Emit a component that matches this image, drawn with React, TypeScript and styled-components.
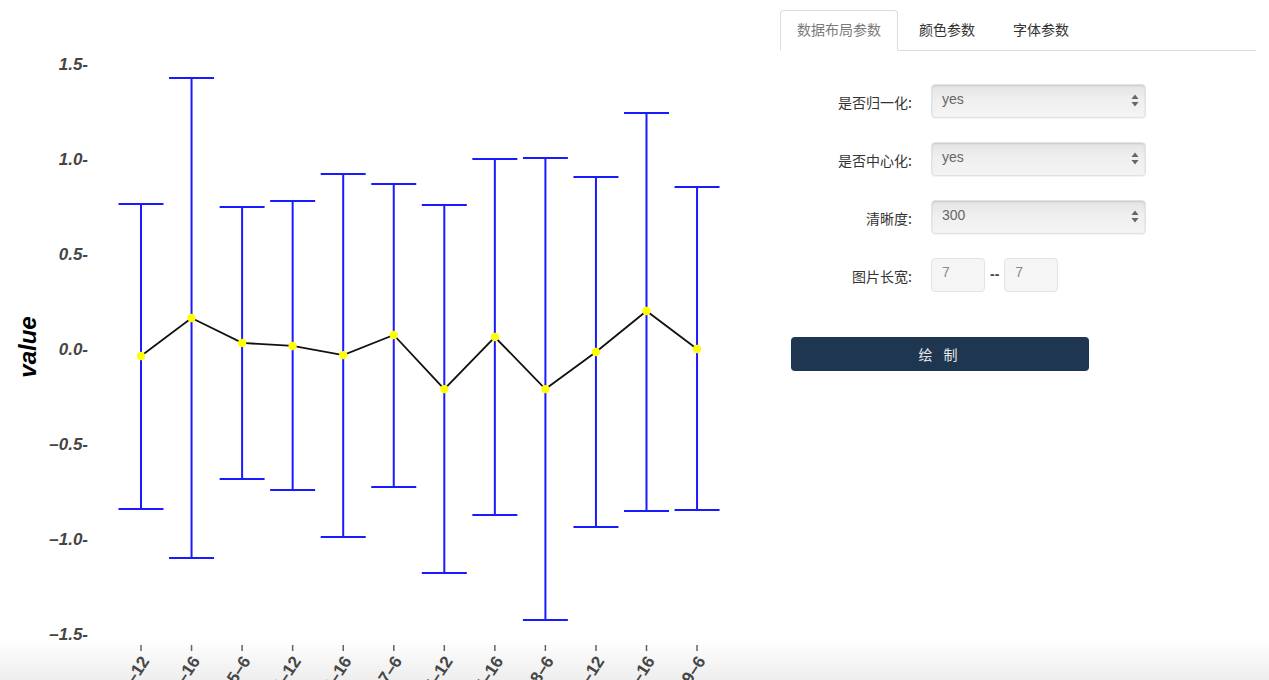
import React from "react";
import styled, { createGlobalStyle } from "styled-components";

const GlobalStyle = createGlobalStyle`
  html, body { margin: 0; padding: 0; background: #fff; }
  body {
    font-family: "Liberation Sans", "Noto Sans CJK SC", sans-serif;
    color: #333;
    overflow: hidden;
  }
`;

const Page = styled.div`
  display: flex;
  width: 1269px;
  height: 680px;
  overflow: hidden;
`;

const ChartPane = styled.div`
  width: 780px;
  flex: 0 0 780px;
  height: 680px;
`;

const Panel = styled.div`
  flex: 1;
  padding: 10px 13px 0 0;
`;

const Tabs = styled.ul`
  display: flex;
  list-style: none;
  margin: 0;
  padding: 0;
  border-bottom: 1px solid #dddddd;
`;

const Tab = styled.li<{ $active?: boolean }>`
  margin: 0 4px -1px 0;
  padding: 0 16px;
  height: 39px;
  line-height: 36px;
  font-size: 14px;
  font-family: "Noto Sans CJK SC", sans-serif;
  color: ${(p) => (p.$active ? "#7a7a7a" : "#333")};
  border: 1px solid ${(p) => (p.$active ? "#dddddd" : "transparent")};
  border-bottom-color: ${(p) => (p.$active ? "#fff" : "transparent")};
  border-radius: 4px 4px 0 0;
  background: ${(p) => (p.$active ? "#fff" : "transparent")};
  cursor: pointer;
`;

const Form = styled.div`
  display: grid;
  grid-template-columns: 132px 215px;
  column-gap: 19px;
  row-gap: 24px;
  align-items: center;
  margin-top: 33px;
`;

const Label = styled.label`
  text-align: right;
  font-size: 14px;
  font-family: "Noto Sans CJK SC", sans-serif;
  color: #333;
  padding-top: 2px;
`;

const SelectWrap = styled.div`
  position: relative;
  height: 34px;
`;

const Select = styled.select`
  appearance: none;
  -webkit-appearance: none;
  width: 100%;
  height: 34px;
  padding: 0 24px 4px 10px;
  border: 1px solid #e2e2e2;
  border-radius: 4px;
  background: linear-gradient(#e4e4e4 0%, #efefef 45%, #f4f4f4 100%);
  box-shadow: inset 0 1px 2px rgba(0, 0, 0, 0.12), 0 1px 1px rgba(0, 0, 0, 0.05);
  font-family: "Liberation Sans", sans-serif;
  font-size: 14px;
  color: #666;
  outline: none;
`;

const Arrows = styled.svg`
  position: absolute;
  right: 7px;
  top: 10px;
  pointer-events: none;
`;

const SizeRow = styled.div`
  display: flex;
  align-items: center;
  gap: 5px;
`;

const SmallInput = styled.input`
  box-sizing: border-box;
  width: 54px;
  height: 34px;
  padding: 0 10px 6px;
  border: 1px solid #e3e3e3;
  border-radius: 4px;
  background: #f5f5f5;
  font-family: "Liberation Sans", sans-serif;
  font-size: 14px;
  color: #888;
  outline: none;
`;

const Dash = styled.span`
  font-size: 14px;
  font-weight: bold;
  color: #444;
  padding-bottom: 2px;
`;

const DrawButton = styled.button`
  display: block;
  margin: 45px 0 0 11px;
  width: 298px;
  height: 34px;
  border: none;
  border-radius: 4px;
  background: #1f3650;
  color: #e8e8e8;
  font-family: "Noto Sans CJK SC", sans-serif;
  font-size: 14px;
  letter-spacing: 4px;
  cursor: pointer;
`;

const BottomShade = styled.div`
  position: fixed;
  left: 0;
  right: 0;
  bottom: 0;
  height: 42px;
  background: linear-gradient(rgba(0, 0, 0, 0), rgba(0, 0, 0, 0.065));
  pointer-events: none;
`;

type Point = { label: string; mean: number; hi: number; lo: number };

const data: Point[] = [
  { label: "4–12", mean: -0.037, hi: 0.763, lo: -0.842 },
  { label: "4–16", mean: 0.163, hi: 1.426, lo: -1.1 },
  { label: "5–6", mean: 0.032, hi: 0.747, lo: -0.684 },
  { label: "5–12", mean: 0.016, hi: 0.779, lo: -0.742 },
  { label: "5–16", mean: -0.032, hi: 0.921, lo: -0.989 },
  { label: "7–6", mean: 0.074, hi: 0.868, lo: -0.726 },
  { label: "7–12", mean: -0.211, hi: 0.758, lo: -1.179 },
  { label: "7–16", mean: 0.063, hi: 1.0, lo: -0.874 },
  { label: "8–6", mean: -0.211, hi: 1.005, lo: -1.426 },
  { label: "8–12", mean: -0.016, hi: 0.905, lo: -0.937 },
  { label: "8–16", mean: 0.2, hi: 1.242, lo: -0.853 },
  { label: "9–6", mean: 0.0, hi: 0.853, lo: -0.847 },
];

const yOf = (v: number) => 349 - 190 * v;
const xOf = (i: number) => 141 + i * 50.55;
const ticks = [1.5, 1.0, 0.5, 0.0, -0.5, -1.0, -1.5];
const fmt = (v: number) => (v < 0 ? "–" + Math.abs(v).toFixed(1) : v.toFixed(1)) + "-";

function Chart() {
  const linePts = data.map((d, i) => `${xOf(i)},${yOf(d.mean)}`).join(" ");
  return (
    <svg width="780" height="680" viewBox="0 0 780 680">
      <text
        x={0}
        y={0}
        transform="translate(36 347) rotate(-90)"
        textAnchor="middle"
        fontFamily="Liberation Sans, sans-serif"
        fontWeight="bold"
        fontStyle="italic"
        fontSize="24"
        fill="#000"
      >
        value
      </text>
      {ticks.map((t) => (
        <text
          key={t}
          x={88}
          y={yOf(t) + 6}
          textAnchor="end"
          fontFamily="Liberation Sans, sans-serif"
          fontWeight="bold"
          fontStyle="italic"
          fontSize="17"
          fill="#454545"
        >
          {fmt(t)}
        </text>
      ))}
      {data.map((d, i) => {
        const x = xOf(i);
        return (
          <g key={d.label} stroke="#1a1aff" strokeWidth="2">
            <line x1={x} x2={x} y1={yOf(d.hi)} y2={yOf(d.lo)} />
            <line x1={x - 22.5} x2={x + 22.5} y1={yOf(d.hi)} y2={yOf(d.hi)} />
            <line x1={x - 22.5} x2={x + 22.5} y1={yOf(d.lo)} y2={yOf(d.lo)} />
          </g>
        );
      })}
      <polyline points={linePts} fill="none" stroke="#111" strokeWidth="1.8" />
      {data.map((d, i) => (
        <circle key={d.label} cx={xOf(i)} cy={yOf(d.mean)} r="4.2" fill="#ffff00" />
      ))}
      {data.map((d, i) => {
        const x = xOf(i);
        return (
          <g key={d.label}>
            <line x1={x} x2={x} y1={645} y2={651} stroke="#666" strokeWidth="1.5" />
            <text
              x={0}
              y={0}
              transform={`translate(${x + 9} 661) rotate(-57)`}
              textAnchor="end"
              fontFamily="Liberation Sans, sans-serif"
              fontWeight="bold"
              fontSize="17"
              fill="#4a4a4a"
            >
              {d.label}
            </text>
          </g>
        );
      })}
    </svg>
  );
}

function Arrow() {
  return (
    <Arrows width="8" height="13" viewBox="0 0 8 13">
      <path d="M4 0.5 L7.5 5 L0.5 5 Z" fill="#666" />
      <path d="M4 12.5 L7.5 8 L0.5 8 Z" fill="#666" />
    </Arrows>
  );
}

function SelectField({ value, options }: { value: string; options: string[] }) {
  return (
    <SelectWrap>
      <Select defaultValue={value}>
        {options.map((o) => (
          <option key={o} value={o}>
            {o}
          </option>
        ))}
      </Select>
      <Arrow />
    </SelectWrap>
  );
}

export default function App() {
  return (
    <>
      <GlobalStyle />
      <Page>
        <ChartPane>
          <Chart />
        </ChartPane>
        <Panel>
          <Tabs>
            <Tab $active>数据布局参数</Tab>
            <Tab>颜色参数</Tab>
            <Tab>字体参数</Tab>
          </Tabs>
          <Form>
            <Label>是否归一化:</Label>
            <SelectField value="yes" options={["yes", "no"]} />
            <Label>是否中心化:</Label>
            <SelectField value="yes" options={["yes", "no"]} />
            <Label>清晰度:</Label>
            <SelectField value="300" options={["72", "150", "300", "600"]} />
            <Label>图片长宽:</Label>
            <SizeRow>
              <SmallInput defaultValue="7" />
              <Dash>--</Dash>
              <SmallInput defaultValue="7" />
            </SizeRow>
          </Form>
          <DrawButton>绘 制</DrawButton>
        </Panel>
      </Page>
      <BottomShade />
    </>
  );
}
